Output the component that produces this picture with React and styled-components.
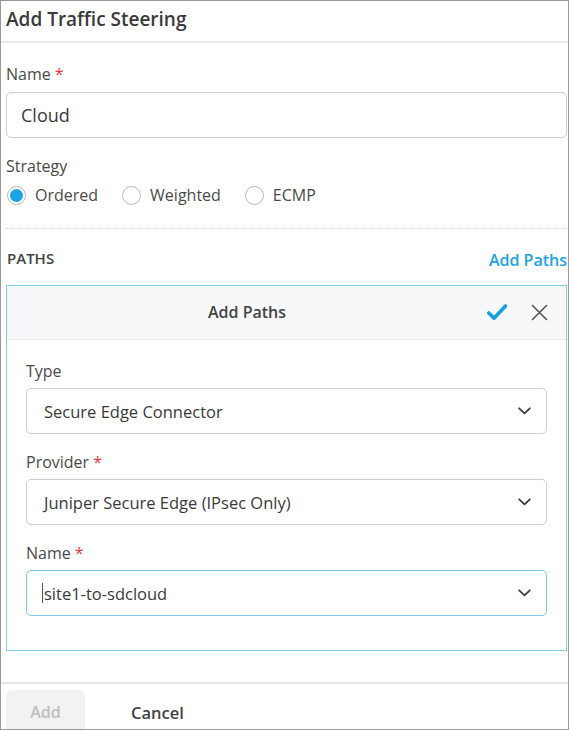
import React from "react";
import styled, { createGlobalStyle } from "styled-components";

const Global = createGlobalStyle`
  html, body { margin: 0; padding: 0; background: #fff; }
  body { font-family: "Open Sans", "Noto Sans", sans-serif; color: #444; }
  * { box-sizing: border-box; }
`;

const Frame = styled.div`
  width: 569px;
  height: 730px;
  border: 1px solid #9a9a9a;
  overflow: hidden;
  display: flex;
  flex-direction: column;
  background: #fff;
`;

const Header = styled.div`
  height: 42px;
  flex: none;
  display: flex;
  align-items: center;
  padding: 0 5px 5px;
  border-bottom: 2px solid #e8e8e8;
`;

const Title = styled.h1`
  margin: 0;
  font-size: 19px;
  font-weight: 600;
  color: #3a3a3a;
`;

const Body = styled.div`
  padding: 21px 1px 0 5px;
  display: flex;
  flex-direction: column;
`;

const Label = styled.label`
  display: block;
  font-size: 16px;
  line-height: 20px;
  color: #4a4a4a;
  margin-top: ${(p) => p.$mt || 0}px;
`;

const Req = styled.span`
  color: #e0393e;
  margin-left: 4px;
`;

const TextBox = styled.div`
  margin-top: 8px;
  height: 46px;
  border: 1px solid #cfcfcf;
  border-radius: 5px;
  display: flex;
  align-items: center;
  padding: 0 14px;
  font-size: 18px;
  color: #3a3a3a;
`;

const RadioRow = styled.div`
  margin-top: 9px;
  display: flex;
  align-items: center;
  height: 20px;
  gap: 23px;
`;

const RadioOpt = styled.div`
  display: flex;
  align-items: center;
  gap: 9px;
  font-size: 16px;
  color: #4a4a4a;
`;

const Circle = styled.span`
  width: 19px;
  height: 19px;
  border-radius: 50%;
  border: 1px solid #b9b9b9;
  margin-left: 1px;
  display: flex;
  align-items: center;
  justify-content: center;
  &::after {
    content: "";
    width: 13px;
    height: 13px;
    border-radius: 50%;
    background: ${(p) => (p.$on ? "#1aa3e6" : "transparent")};
  }
`;

const Dotted = styled.div`
  margin-top: 23px;
  border-top: 1px dotted #d8d8d8;
  margin-right: -1px;
`;

const SectionRow = styled.div`
  margin-top: 20px;
  display: flex;
  justify-content: space-between;
  align-items: center;
  height: 20px;
`;

const SectionTitle = styled.div`
  font-size: 15px;
  font-weight: 600;
  color: #444;
  padding-left: 1px;
  margin-top: -2px;
`;

const LinkText = styled.a`
  font-size: 16px;
  font-weight: 600;
  color: #1ba4e6;
  margin-top: 1px;
`;

const Panel = styled.div`
  margin-top: 16px;
  border: 1px solid #86d0f2;
`;

const PanelHead = styled.div`
  height: 54px;
  background: #f7f8f9;
  border-bottom: 1px solid #ebebeb;
  display: flex;
  align-items: center;
  padding-bottom: 1px;
`;

const PanelTitle = styled.div`
  flex: 1;
  text-align: center;
  font-size: 16px;
  font-weight: 600;
  color: #444;
`;

const HeadIcons = styled.div`
  width: 79px;
  display: flex;
  align-items: center;
  gap: 24px;
`;

const PanelBody = styled.div`
  padding: 21px 19px 34px 19px;
`;

const Select = styled.div`
  margin-top: 7px;
  height: 46px;
  border: 1px solid ${(p) => (p.$focus ? "#7ccaf0" : "#cfcfcf")};
  border-radius: 5px;
  display: flex;
  align-items: center;
  justify-content: space-between;
  padding: 0 15px 0 17px;
  font-size: 16.5px;
  color: #3a3a3a;
`;

const Caret = styled.span`
  display: inline-block;
  width: 1px;
  height: 20px;
  background: #555;
  margin-left: -2px;
  margin-right: 1px;
`;

const SelText = styled.span`
  display: flex;
  align-items: center;
`;

const Footer = styled.div`
  margin-top: 31px;
  border-top: 2px solid #e6e6e6;
  padding: 6px 0 0 5px;
  display: flex;
  align-items: flex-start;
  gap: 46px;
`;

const AddBtn = styled.button`
  width: 79px;
  height: 44px;
  border: none;
  border-radius: 6px;
  background: #f2f2f2;
  color: #bdbdbd;
  font-family: inherit;
  font-size: 16px;
  font-weight: 600;
  padding: 0;
`;

const CancelBtn = styled.button`
  height: 44px;
  border: none;
  background: none;
  color: #444;
  font-family: inherit;
  font-size: 16.5px;
  font-weight: 600;
  padding: 0;
`;

const Chevron = () => (
  <svg width="13" height="8" viewBox="0 0 13 8" fill="none">
    <path d="M1.2 1.3 L6.5 6.3 L11.8 1.3" stroke="#3d3d3d" strokeWidth="1.8" strokeLinecap="round" strokeLinejoin="round" />
  </svg>
);

const Check = () => (
  <svg width="20" height="17" viewBox="0 0 20 17" fill="none">
    <path d="M1.8 9 L7 14.3 L18.5 2" stroke="#1a9fe3" strokeWidth="3.6" strokeLinecap="round" strokeLinejoin="round" />
  </svg>
);

const Close = () => (
  <svg width="17" height="17" viewBox="0 0 17 17" fill="none">
    <path d="M1.5 1.5 L15.5 15.5 M15.5 1.5 L1.5 15.5" stroke="#555" strokeWidth="1.6" strokeLinecap="round" />
  </svg>
);

const Radio = ({ on, children }) => (
  <RadioOpt>
    <Circle $on={on} />
    {children}
  </RadioOpt>
);

export default function App() {
  return (
    <>
      <Global />
      <Frame>
        <Header>
          <Title>Add Traffic Steering</Title>
        </Header>
        <Body>
          <Label>
            Name<Req>*</Req>
          </Label>
          <TextBox>Cloud</TextBox>
          <Label $mt={18}>Strategy</Label>
          <RadioRow>
            <Radio on>Ordered</Radio>
            <Radio>Weighted</Radio>
            <Radio>ECMP</Radio>
          </RadioRow>
          <Dotted />
          <SectionRow>
            <SectionTitle>PATHS</SectionTitle>
            <LinkText>Add Paths</LinkText>
          </SectionRow>
          <Panel>
            <PanelHead>
              <PanelTitle>Add Paths</PanelTitle>
              <HeadIcons>
                <Check />
                <Close />
              </HeadIcons>
            </PanelHead>
            <PanelBody>
              <Label>Type</Label>
              <Select>
                <SelText>Secure Edge Connector</SelText>
                <Chevron />
              </Select>
              <Label $mt={18}>
                Provider<Req>*</Req>
              </Label>
              <Select>
                <SelText>Juniper Secure Edge (IPsec Only)</SelText>
                <Chevron />
              </Select>
              <Label $mt={18}>
                Name<Req>*</Req>
              </Label>
              <Select $focus>
                <SelText>
                  <Caret />
                  site1-to-sdcloud
                </SelText>
                <Chevron />
              </Select>
            </PanelBody>
          </Panel>
        </Body>
        <Footer>
          <AddBtn disabled>Add</AddBtn>
          <CancelBtn>Cancel</CancelBtn>
        </Footer>
      </Frame>
    </>
  );
}
